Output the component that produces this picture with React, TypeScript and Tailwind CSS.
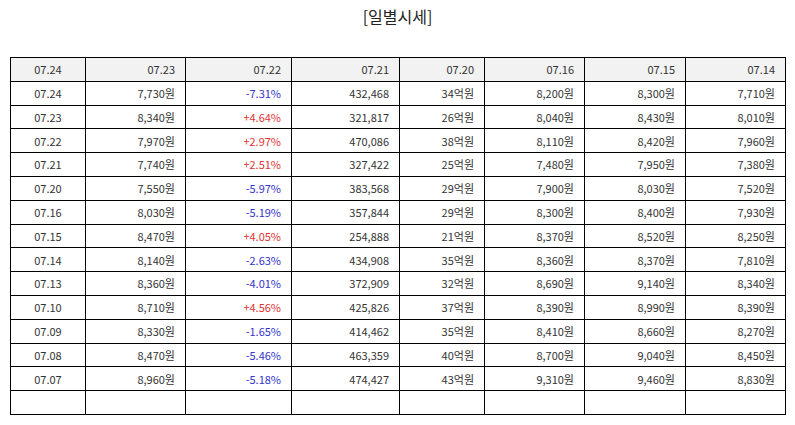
import React from "react";

const rows: string[][] = [
  ["07.24", "7,730원", "-7.31%", "432,468", "34억원", "8,200원", "8,300원", "7,710원"],
  ["07.23", "8,340원", "+4.64%", "321,817", "26억원", "8,040원", "8,430원", "8,010원"],
  ["07.22", "7,970원", "+2.97%", "470,086", "38억원", "8,110원", "8,420원", "7,960원"],
  ["07.21", "7,740원", "+2.51%", "327,422", "25억원", "7,480원", "7,950원", "7,380원"],
  ["07.20", "7,550원", "-5.97%", "383,568", "29억원", "7,900원", "8,030원", "7,520원"],
  ["07.16", "8,030원", "-5.19%", "357,844", "29억원", "8,300원", "8,400원", "7,930원"],
  ["07.15", "8,470원", "+4.05%", "254,888", "21억원", "8,370원", "8,520원", "8,250원"],
  ["07.14", "8,140원", "-2.63%", "434,908", "35억원", "8,360원", "8,370원", "7,810원"],
  ["07.13", "8,360원", "-4.01%", "372,909", "32억원", "8,690원", "9,140원", "8,340원"],
  ["07.10", "8,710원", "+4.56%", "425,826", "37억원", "8,390원", "8,990원", "8,390원"],
  ["07.09", "8,330원", "-1.65%", "414,462", "35억원", "8,410원", "8,660원", "8,270원"],
  ["07.08", "8,470원", "-5.46%", "463,359", "40억원", "8,700원", "9,040원", "8,450원"],
  ["07.07", "8,960원", "-5.18%", "474,427", "43억원", "9,310원", "9,460원", "8,830원"],
];

const header = ["07.24", "07.23", "07.22", "07.21", "07.20", "07.16", "07.15", "07.14"];

export default function App() {
  return (
    <div
      className="w-[795px] h-[425px] bg-white text-[#333]"
      style={{ fontFamily: '"Noto Sans CJK KR", "Noto Sans", sans-serif' }}
    >
      <div className="pt-[4px] h-[57px] text-center text-[16px] leading-[24px] text-[#222]">[일별시세]</div>
      <div className="px-[10px]">
        <table className="w-[775px] table-fixed border-collapse text-[11px]">
          <colgroup>
            <col className="w-[75px]" />
            <col className="w-[100px]" />
            <col className="w-[106px]" />
            <col className="w-[108px]" />
            <col className="w-[85px]" />
            <col className="w-[100px]" />
            <col className="w-[101px]" />
            <col className="w-[100px]" />
          </colgroup>
          <thead>
            <tr className="h-[23.8px] bg-[#f2f2f2]">
              {header.map((h, i) => (
                <th
                  key={i}
                  className={`border border-black font-normal p-0 ${i === 0 ? "text-center" : "text-right pr-[10px]"}`}
                >
                  {h}
                </th>
              ))}
            </tr>
          </thead>
          <tbody>
            {rows.map((r, ri) => (
              <tr key={ri} className="h-[23.8px]">
                {r.map((c, ci) => {
                  let color = "";
                  if (ci === 2) color = c.startsWith("-") ? "text-[#3333cc]" : "text-[#e03333]";
                  return (
                    <td
                      key={ci}
                      className={`border border-black p-0 ${ci === 0 ? "text-center" : "text-right pr-[10px]"} ${color}`}
                    >
                      {c}
                    </td>
                  );
                })}
              </tr>
            ))}
            <tr className="h-[23.8px]">
              {header.map((_, i) => (
                <td key={i} className="border border-black p-0"></td>
              ))}
            </tr>
          </tbody>
        </table>
      </div>
    </div>
  );
}
